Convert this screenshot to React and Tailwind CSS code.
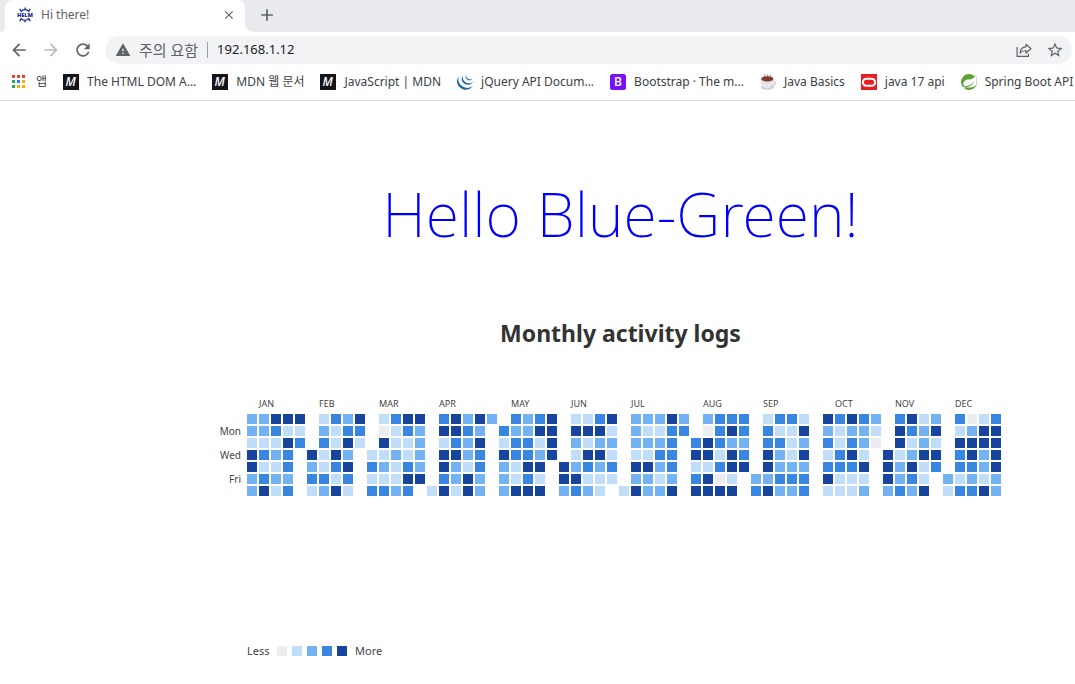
import React from "react";
import { MdArrowBack, MdArrowForward, MdRefresh, MdWarning, MdStarBorder, MdClose, MdAdd } from "react-icons/md";
import { SiJquery, SiSpring } from "react-icons/si";

const LEVELS = {
  0: "bg-[#ebedf0]",
  1: "bg-[#c0ddf9]",
  2: "bg-[#73b3f3]",
  3: "bg-[#3886e1]",
  4: "bg-[#17459e]",
  ".": "",
};

// One string per weekday, one character per week column; "." is an empty slot.
const WEEKDAYS = [
  { label: "", days: "22444.1324.1344" + ".34242.3234.1134" + ".22242.2333.1331" + ".43432.3412.3013" },
  { label: "Mon", days: "22311.2133.0132" + ".4432.32244.4441" + ".21133.0343.3114" + ".21221.4324.1244" },
  { label: "", days: "11143.3141.4112" + ".1324.13314.2122" + ".2223.34322.3312" + ".31320.4121.4444" },
  { label: "Wed", days: "4323.4142.11212" + ".4423.43324.1441" + ".1133.44143.4214" + ".1341.41244.3424" },
  { label: "", days: "4113.2134.32132" + ".4213.2144.42323" + ".4423.11344.4222" + ".3334.42413.3324" },
  { label: "Fri", days: "2322.3313.11144" + ".3242.2131.44111" + ".2212.3401.22333" + ".4111.4231.21212" },
  { label: "", days: "2413.1241.3323." + "14142.2444.2321." + "14224.4444.34223" + ".1112.2324.13342" },
];

const MONTHS = [
  ["JAN", 1], ["FEB", 6], ["MAR", 11], ["APR", 16], ["MAY", 22], ["JUN", 27],
  ["JUL", 32], ["AUG", 38], ["SEP", 43], ["OCT", 49], ["NOV", 54], ["DEC", 59],
];

function HelmIcon() {
  return (
    <svg viewBox="0 0 16 16" className="size-4 shrink-0" fill="none" stroke="#1a2a9c" strokeWidth="1.3" aria-hidden="true">
      <path d="M3.6 4.8a5.6 5.6 0 0 1 8.8 0M3.6 11.2a5.6 5.6 0 0 0 8.8 0M8 3V.4M8 13v2.6M4.4 4.2 2.6 1.8M11.6 4.2l1.8-2.4M4.4 11.8l-1.8 2.4M11.6 11.8l1.8 2.4" />
      <text x="8" y="10" textAnchor="middle" fontSize="5.6" fontWeight="800" fontFamily="Open Sans, sans-serif" fill="#1a2a9c" stroke="none">HELM</text>
    </svg>
  );
}

function AppsIcon() {
  const colors = ["#ea4335", "#ea4335", "#ea4335", "#34a853", "#1a86f4", "#fbaa04", "#34a853", "#fbaa04", "#fbaa04"];
  return (
    <svg viewBox="0 -1 16 16" className="size-4 shrink-0" aria-hidden="true">
      {colors.map((c, i) => (
        <rect key={i} x={(i % 3) * 5} y={Math.floor(i / 3) * 5} width="3" height="3" fill={c} />
      ))}
    </svg>
  );
}

function MdnIcon() {
  return (
    <svg viewBox="0 0 16 16" className="size-4 shrink-0" aria-hidden="true">
      <rect width="16" height="16" fill="#15141a" />
      <text x="7.6" y="12.4" textAnchor="middle" fontSize="12" fontWeight="600" fontStyle="italic" fontFamily="Open Sans, sans-serif" fill="#fff">M</text>
    </svg>
  );
}

function BootstrapIcon() {
  return (
    <svg viewBox="0 0 16 16" className="size-4 shrink-0" aria-hidden="true">
      <rect width="16" height="16" rx="2.5" fill="#7612f8" />
      <text x="8" y="12.3" textAnchor="middle" fontSize="12" fontWeight="600" fontFamily="Open Sans, sans-serif" fill="#fff">B</text>
    </svg>
  );
}

function CoffeeIcon() {
  return (
    <svg viewBox="0 0 16 16" className="size-4 shrink-0" aria-hidden="true">
      <ellipse cx="7.5" cy="13.2" rx="6.5" ry="2.5" fill="#c9cdd2" />
      <path d="M.8 5.5c0 5.4 2.6 9 6.5 9s6.5-3.6 6.5-9z" fill="#e3e5e8" />
      <path d="M13.3 7.5c3-.5 3 3.7-1.2 3.9" fill="none" stroke="#c9cdd2" strokeWidth="1.3" />
      <ellipse cx="7.3" cy="5.2" rx="6.8" ry="3.3" fill="#d6d9dd" />
      <ellipse cx="7.3" cy="4.9" rx="5.9" ry="2.7" fill="#7d3b28" />
      <path d="M4.6 3c-.8-1 .8-1.6.2-2.6M7.5 3c-.8-1 .8-1.8.2-2.7M10.4 3c-.8-1 .8-1.4.2-2.4" fill="none" stroke="#a96a55" />
    </svg>
  );
}

function OracleIcon() {
  return (
    <svg viewBox="0 0 16 16" className="size-4 shrink-0" aria-hidden="true">
      <rect width="16" height="16" fill="#ec1c24" />
      <rect x="1.9" y="4.7" width="12.2" height="7" rx="3.5" fill="none" stroke="#fff" strokeWidth="2" />
    </svg>
  );
}

function ShareIcon() {
  return (
    <svg viewBox="0 0 16 16" className="size-4" fill="none" stroke="#5f6368" strokeWidth="1.2" strokeLinejoin="round" aria-hidden="true">
      <path d="M1.1 5v9.4h11.3v-2.6" />
      <path d="M4 11c.3-3.8 2.4-6 6-6.2V2.3L15 6.700l-5 4.3V8.5C7.2 8.5 5.5 9.2 4 11z" />
    </svg>
  );
}

const BOOKMARKS = [
  { label: "앱", icon: <AppsIcon /> },
  { label: "The HTML DOM A...", icon: <MdnIcon /> },
  { label: "MDN 웹 문서", icon: <MdnIcon /> },
  { label: "JavaScript | MDN", icon: <MdnIcon /> },
  { label: "jQuery API Docum...", icon: <SiJquery className="size-4 shrink-0 text-[#1b69ab]" /> },
  { label: "Bootstrap · The m...", icon: <BootstrapIcon /> },
  { label: "Java Basics", icon: <CoffeeIcon /> },
  { label: "java 17 api", icon: <OracleIcon /> },
  { label: "Spring Boot API", icon: <SiSpring className="size-4 shrink-0 text-[#5fa134]" /> },
];

function BrowserChrome() {
  return (
    <header className="border-b border-[#dadce0] bg-white text-[#3c4043]">
      <div className="flex h-8 items-stretch bg-[#e8eaed]">
        <div className="w-[5px] bg-white"><div className="h-full rounded-br-lg bg-[#e8eaed]" /></div>
        <div className="flex w-60 items-center gap-2 rounded-t-lg bg-white pr-2 pb-0.5 pl-3 text-[12px] text-[#5f6368]">
          <HelmIcon />
          <span className="flex-1">Hi there!</span>
          <button aria-label="Close tab" className="grid size-4 place-items-center"><MdClose className="size-3.5" /></button>
        </div>
        <div className="w-2 bg-white"><div className="h-full rounded-bl-lg bg-[#e8eaed]" /></div>
        <button aria-label="New tab" className="ml-1 flex items-center pb-0.5 text-[#5f6368]"><MdAdd className="size-5" /></button>
      </div>
      <div className="flex h-9 items-center gap-3 pr-[3px] pl-[9px] text-[#5f6368]">
        <button aria-label="Back"><MdArrowBack className="size-5" /></button>
        <button aria-label="Forward" className="text-[#babcbe]"><MdArrowForward className="size-5" /></button>
        <button aria-label="Reload"><MdRefresh className="size-5" /></button>
        <div className="flex h-7 flex-1 items-center rounded-full bg-[#f1f3f4] pr-2 pl-2.5 text-[13px]">
          <MdWarning className="size-4 shrink-0" />
          <span className="ml-2 text-[15px] leading-5 whitespace-nowrap">주의 요함</span>
          <span className="mx-[9px] h-4 w-px bg-[#9aa0a6]" />
          <input aria-label="Address" defaultValue="192.168.1.12" className="min-w-0 flex-1 bg-transparent text-[#202124] outline-none" />
          <button aria-label="Share" className="mr-[14px]"><ShareIcon /></button>
          <button aria-label="Bookmark this page"><MdStarBorder className="size-[18px]" /></button>
        </div>
      </div>
      <nav className="flex h-8 items-center gap-4 overflow-hidden pb-1 pl-3 text-[12px]">
        {BOOKMARKS.map((b) => (
          <a key={b.label} href="#" className="flex shrink-0 items-center gap-2 whitespace-nowrap">
            {b.icon}
            {b.label}
          </a>
        ))}
      </nav>
    </header>
  );
}

function ActivityChart() {
  return (
    <section aria-label="Activity by day" className="mt-[47px] text-[#444]">
      <div className="ml-[81px] grid grid-cols-[repeat(63,10px)] gap-x-0.5 text-[9px] leading-4">
        {MONTHS.map(([name, column]) => (
          <span key={name} className="w-0 whitespace-nowrap" style={{ gridColumnStart: column + 1 }}>{name}</span>
        ))}
      </div>
      <div className="mt-0.5 flex flex-col gap-0.5">
        {WEEKDAYS.map((row, r) => (
          <div key={r} className="flex items-center gap-1.5">
            <span className="h-2.5 w-[75px] shrink-0 text-right text-[10px] leading-[10px]">{row.label}</span>
            <div className="flex gap-0.5">
              {row.days.split("").map((level, i) => (
                <span key={i} className={`size-2.5 shrink-0 ${LEVELS[level]}`} />
              ))}
            </div>
          </div>
        ))}
      </div>
      <div className="mt-[147px] ml-[81px] flex h-4 items-center gap-[5px] text-[11px]">
        <span className="w-[25px]">Less</span>
        {["0", "1", "2", "3", "4"].map((level) => (
          <span key={level} className={`size-2.5 ${LEVELS[level]}`} />
        ))}
        <span className="ml-[3px]">More</span>
      </div>
    </section>
  );
}

export default function App() {
  return (
    <div className="min-h-screen overflow-x-hidden bg-white font-['Noto_Sans','Noto_Sans_CJK_KR',sans-serif]">
      <BrowserChrome />
      <main className="pt-[69px] pl-[166px]">
        <h1 className="text-center text-[61px] leading-[88px] font-extralight whitespace-nowrap text-[#0000ff]">Hello Blue-Green!</h1>
        <h2 className="mt-[59px] text-center text-[23px] leading-8 font-bold text-[#333]">Monthly activity logs</h2>
        <ActivityChart />
      </main>
    </div>
  );
}
